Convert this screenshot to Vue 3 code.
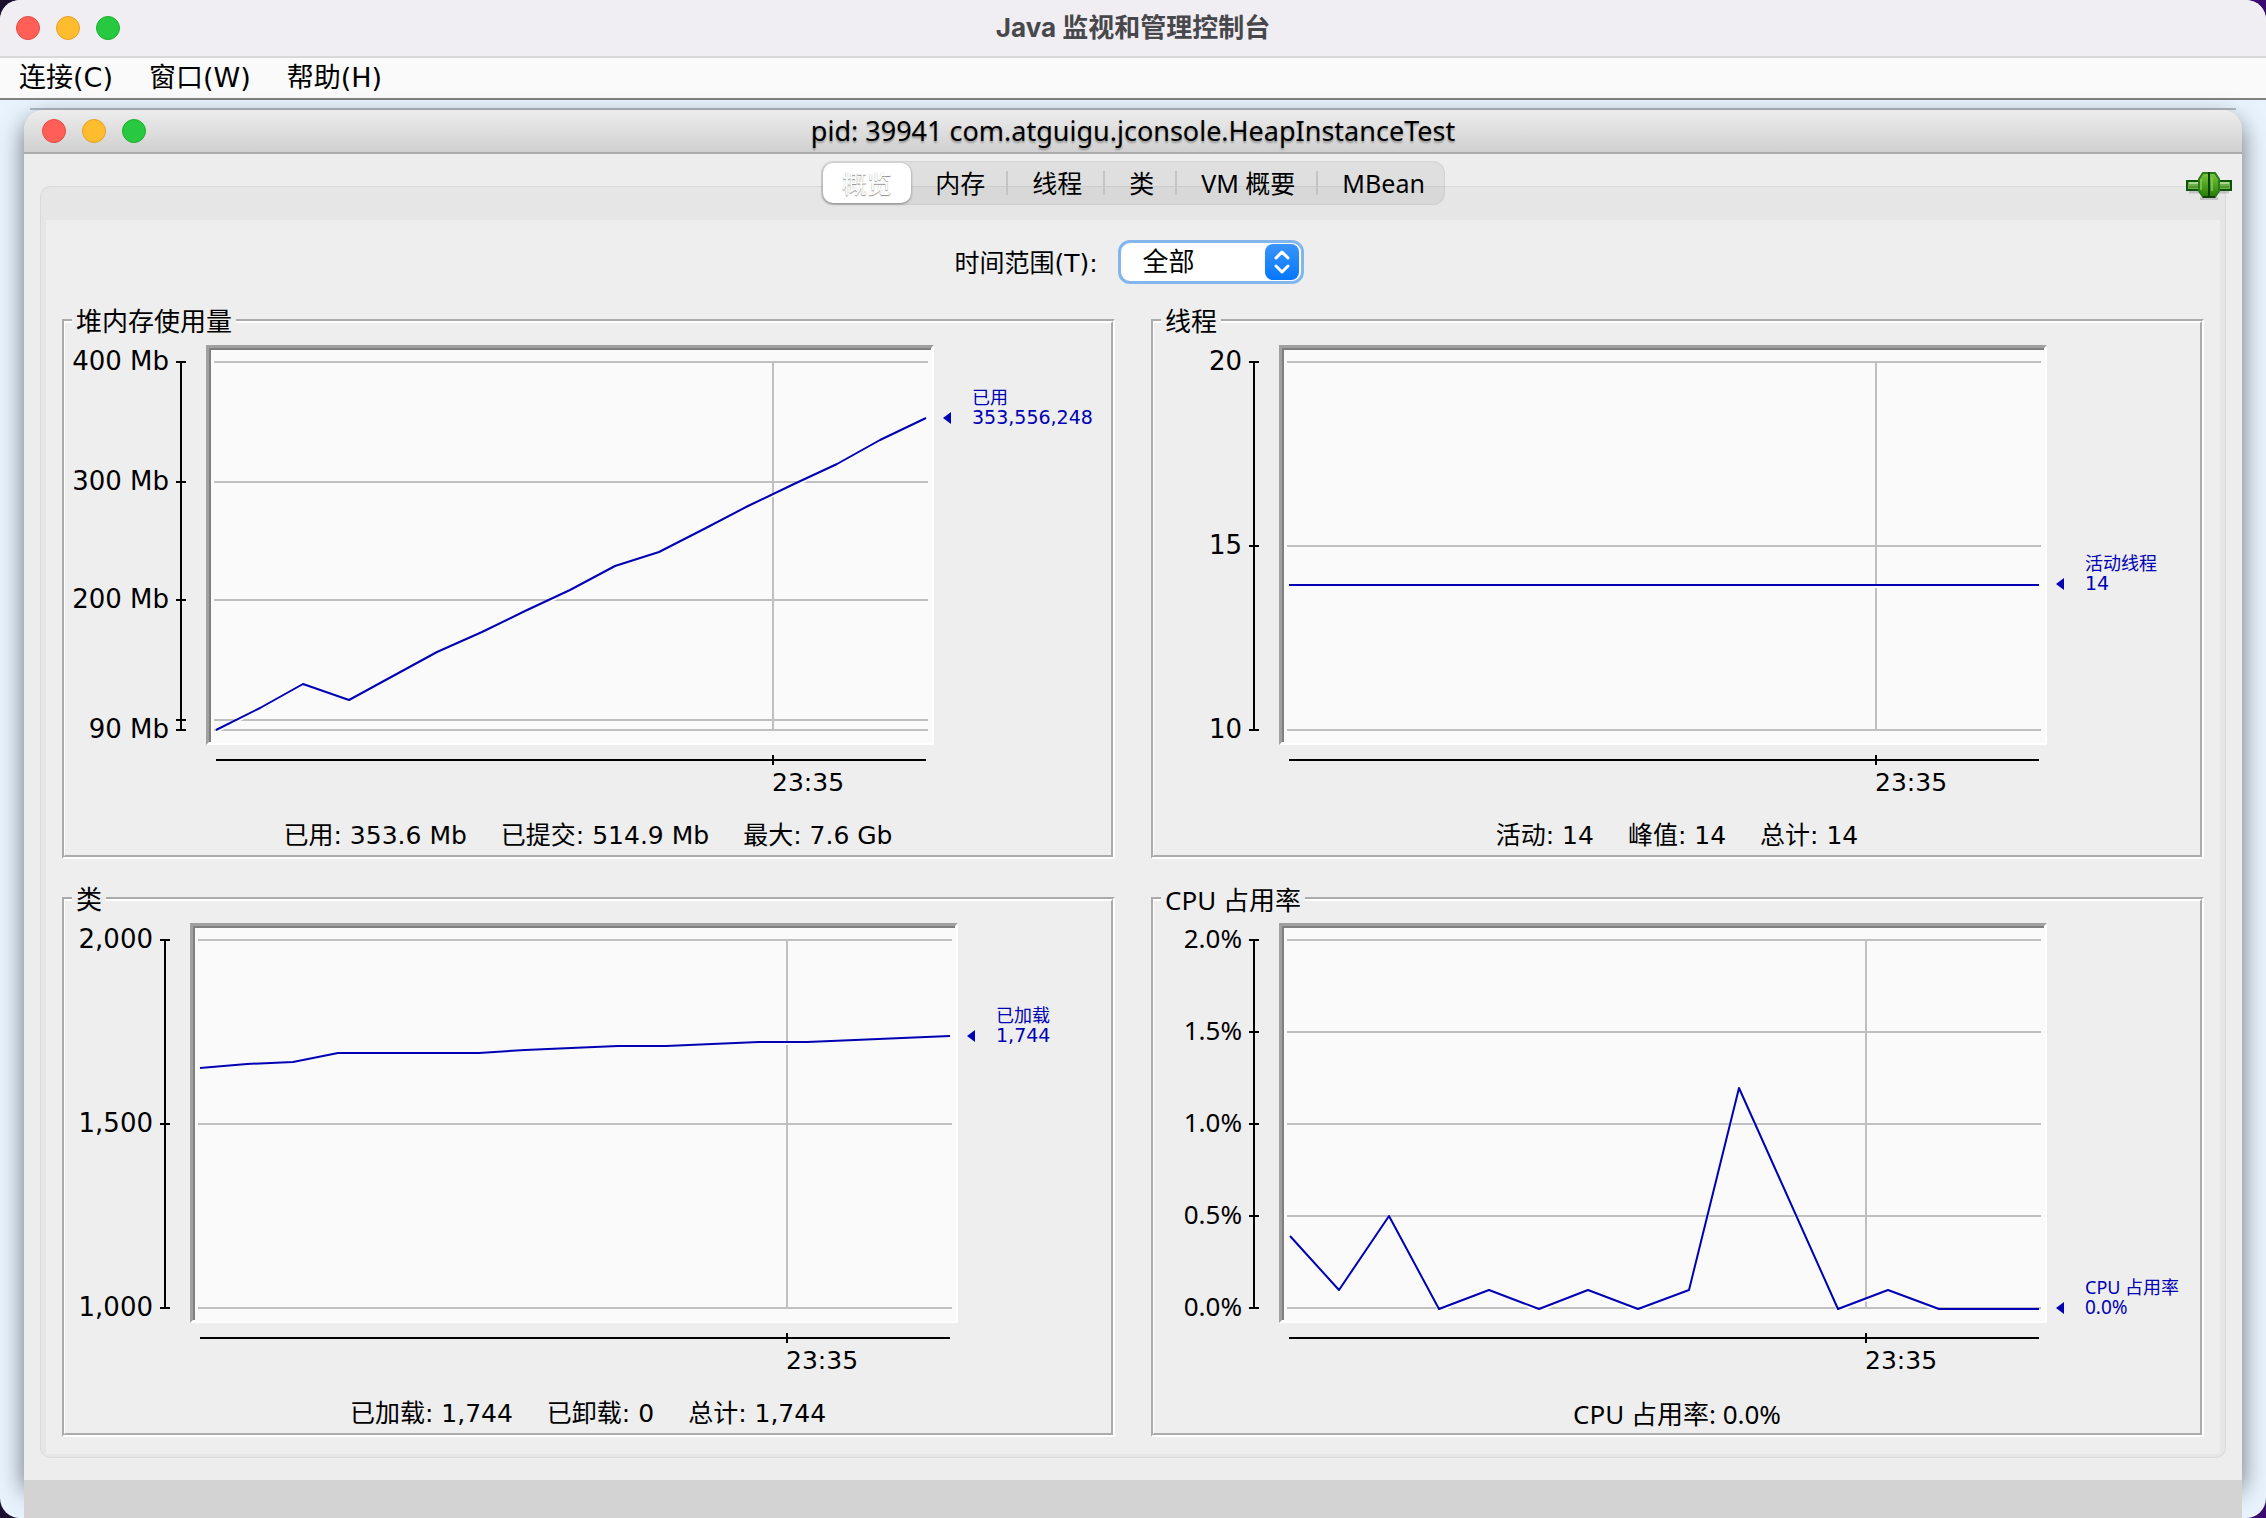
<script setup>
import { ref } from 'vue'

const menus = ['连接(C)', '窗口(W)', '帮助(H)']
const tabs = ['概览', '内存', '线程', '类', 'VM 概要', 'MBean']
const activeTab = ref('概览')
const range = ref('全部')

// Plot coordinates are in the units of the chart's own viewBox.
const charts = [
  {
    title: '堆内存使用量',
    axisX: 115,
    left: 140,
    right: 868,
    timeX: 707,
    ticks: [
      { y: 27, label: '400 Mb' },
      { y: 147, label: '300 Mb' },
      { y: 265, label: '200 Mb' },
      { y: 385, label: '' },
      { y: 395, label: '90 Mb' }
    ],
    points:
      '150,395 194,373 237,349 283,365 327,341 371,317 416,297 459,276 504,255 549,231 593,217 638,194 682,171 728,149 771,129 814,105 860,83',
    end: 83,
    series: '已用',
    value: '353,556,248',
    summary: ['已用: 353.6 Mb', '已提交: 514.9 Mb', '最大: 7.6 Gb']
  },
  {
    title: '线程',
    axisX: 99,
    left: 124,
    right: 892,
    timeX: 721,
    ticks: [
      { y: 27, label: '20' },
      { y: 211, label: '15' },
      { y: 395, label: '10' }
    ],
    points: '134,250 884,250',
    end: 249,
    series: '活动线程',
    value: '14',
    summary: ['活动: 14', '峰值: 14', '总计: 14']
  },
  {
    title: '类',
    axisX: 99,
    left: 124,
    right: 892,
    timeX: 721,
    ticks: [
      { y: 27, label: '2,000' },
      { y: 211, label: '1,500' },
      { y: 395, label: '1,000' }
    ],
    points:
      '134,155 181,151 227,149 272,140 413,140 459,137 505,135 552,133 600,133 646,131 693,129 741,129 789,127 836,125 884,123',
    end: 123,
    series: '已加载',
    value: '1,744',
    summary: ['已加载: 1,744', '已卸载: 0', '总计: 1,744']
  },
  {
    title: 'CPU 占用率',
    percent: true,
    axisX: 99,
    left: 124,
    right: 892,
    timeX: 711,
    ticks: [
      { y: 27, label: '2.0%' },
      { y: 119, label: '1.5%' },
      { y: 211, label: '1.0%' },
      { y: 303, label: '0.5%' },
      { y: 395, label: '0.0%' }
    ],
    points:
      '135,323 184,377 234,303 284,396 334,377 384,396 433,377 483,396 534,377 584,175 683,396 733,377 784,396 884,396',
    end: 395,
    series: 'CPU 占用率',
    value: '0.0%',
    summary: ['CPU 占用率: 0.0%']
  }
]
</script>

<template>
  <div class="window">
    <header class="titlebar">
      <div class="lights"><i class="red"></i><i class="yellow"></i><i class="green"></i></div>
      <h1>Java 监视和管理控制台</h1>
    </header>

    <nav class="menubar">
      <button v-for="m in menus" :key="m" type="button">{{ m }}</button>
    </nav>

    <main class="desktop">
      <div class="topline"></div>
      <section class="frame">
        <header class="frame-title">
          <div class="lights"><i class="red"></i><i class="yellow"></i><i class="green"></i></div>
          <h2>pid: 39941 com.atguigu.jconsole.HeapInstanceTest</h2>
        </header>

        <div class="frame-body">
          <svg class="plug" viewBox="0 0 46 28" role="img" aria-label="已连接">
            <defs>
              <linearGradient id="leaf" x1="0" y1="0" x2="0" y2="1">
                <stop offset="0" stop-color="#7cc83c" />
                <stop offset="1" stop-color="#237a06" />
              </linearGradient>
            </defs>
            <path d="M3 20H43M14 27H32" stroke="#000" stroke-opacity=".16" stroke-width="3" />
            <rect x="1" y="9" width="44" height="9" fill="#6fae4c" stroke="#0f5408" stroke-width="2" />
            <path d="M3 11H43" stroke="#a9d88c" stroke-width="2" />
            <path d="M3 15H43" stroke="#4f9a30" stroke-width="2" />
            <path d="M17 1H29L33 7V19L29 25H17L13 19V7Z" fill="url(#leaf)" stroke="#2d7a1c" stroke-width="2" />
            <path d="M15 7V18M26 5V19" stroke="#8acb58" stroke-width="2" stroke-opacity=".7" />
            <path d="M23 0V26" stroke="#08420a" stroke-width="2" />
            <path d="M17 25H29" stroke="#173f12" stroke-width="2" />
          </svg>

          <div class="tabs" role="tablist">
            <button
              v-for="t in tabs"
              :key="t"
              type="button"
              role="tab"
              :aria-selected="t === activeTab"
              :class="{ active: t === activeTab }"
              @click="activeTab = t"
            >{{ t }}</button>
          </div>

          <div class="pane">
            <div class="pane-inner">
              <div class="range">
                <label for="range">时间范围(T):</label>
                <div class="picker">
                  <select id="range" v-model="range">
                    <option>全部</option>
                  </select>
                  <svg viewBox="0 0 34 36" aria-hidden="true">
                    <defs>
                      <linearGradient id="knob" x1="0" y1="0" x2="0" y2="1">
                        <stop offset="0" stop-color="#3a94fb" />
                        <stop offset="1" stop-color="#0477fd" />
                      </linearGradient>
                    </defs>
                    <rect width="34" height="36" rx="8" fill="url(#knob)" />
                    <path
                      d="M11 14L17 8L23 14M11 22L17 28L23 22"
                      fill="none"
                      stroke="#fff"
                      stroke-width="3"
                      stroke-linecap="round"
                      stroke-linejoin="round"
                    />
                  </svg>
                </div>
              </div>

              <div class="charts">
                <fieldset v-for="c in charts" :key="c.title" :class="{ percent: c.percent }">
                  <legend>{{ c.title }}</legend>
                  <svg class="chart" viewBox="-1 1 1046 480" role="img" :aria-label="c.title">
                    <rect :x="c.left" y="10" :width="c.right - c.left" height="400" fill="#fff" />
                    <rect :x="c.left + 5" y="15" :width="c.right - c.left - 7" height="393" fill="#fafafa" />
                    <path
                      :d="`M${c.left} 410V10H${c.right}L${c.right - 3} 13H${c.left + 3}V407Z`"
                      fill="#a0a0a0"
                    />
                    <path
                      :d="`M${c.left + 4} 407V14H${c.right - 3}`"
                      fill="none"
                      stroke="#808080"
                      stroke-width="2"
                    />
                    <g stroke="#c0c0c0" stroke-width="2">
                      <line
                        v-for="t in c.ticks"
                        :key="t.y"
                        :x1="c.left + 8"
                        :x2="c.right - 6"
                        :y1="t.y"
                        :y2="t.y"
                      />
                      <line :x1="c.timeX" :x2="c.timeX" y1="26" y2="396" />
                    </g>
                    <g fill="none" stroke-width="2" stroke-linejoin="round">
                      <polyline :points="c.points" stroke="#fafafa" transform="translate(0 2)" />
                      <polyline :points="c.points" stroke="#0000b4" />
                    </g>
                    <g stroke="#000" stroke-width="2">
                      <line :x1="c.axisX" :x2="c.axisX" y1="26" y2="396" />
                      <line
                        v-for="t in c.ticks"
                        :key="t.y"
                        :x1="c.axisX - 5"
                        :x2="c.axisX + 5"
                        :y1="t.y"
                        :y2="t.y"
                      />
                      <line :x1="c.left + 10" :x2="c.right - 8" y1="425" y2="425" />
                      <line :x1="c.timeX" :x2="c.timeX" y1="420" y2="430" />
                    </g>
                    <g class="axis-text">
                      <text
                        v-for="t in c.ticks"
                        :key="t.y"
                        :x="c.axisX - 12"
                        :y="t.y + 8"
                        text-anchor="end"
                      >{{ t.label }}</text>
                      <text class="time" :x="c.timeX - 1" y="456">23:35</text>
                    </g>
                    <path :d="`M${c.right + 9} ${c.end}l8 -6v12z`" fill="#0000b4" />
                    <g class="series-text">
                      <text :x="c.right + 38" :y="c.end - 14">{{ c.series }}</text>
                      <text class="value" :x="c.right + 38" :y="c.end + 6">{{ c.value }}</text>
                    </g>
                  </svg>
                  <p class="summary">
                    <span v-for="s in c.summary" :key="s">{{ s }}</span>
                  </p>
                </fieldset>
              </div>
            </div>
          </div>
        </div>
      </section>
      <footer class="statusbar"></footer>
    </main>
  </div>
</template>

<style>
body {
  margin: 0;
  background: linear-gradient(90deg, #1d0f2e, #3a0a70);
}
</style>

<style scoped>
.window {
  min-height: 100vh;
  display: flex;
  flex-direction: column;
  overflow: hidden;
  border-radius: 20px;
  background: #e8f3fe;
  color: #000;
  font: 26px/32px "DejaVu Sans", "Noto Sans CJK SC", sans-serif;
}
button,
select {
  font: inherit;
  color: inherit;
  border: 0;
  background: none;
  margin: 0;
  padding: 0;
}
h1,
h2,
p {
  margin: 0;
}
.titlebar {
  display: grid;
  grid-template-columns: 1fr auto 1fr;
  align-items: center;
  height: 56px;
  padding: 0 16px;
  background: #f0eef3;
  border-bottom: 2px solid #d8d7da;
}
.titlebar h1 {
  font: 700 26px/32px Inter, "Noto Sans CJK SC", sans-serif;
  color: #48474b;
}
.lights {
  display: flex;
  gap: 16px;
}
.lights i {
  width: 24px;
  height: 24px;
  box-sizing: border-box;
  border-radius: 50%;
  border: 1px solid;
}
.lights .red {
  background: #ff5f57;
  border-color: #e24b41;
}
.lights .yellow {
  background: #febc2e;
  border-color: #e1a325;
}
.lights .green {
  background: #28c840;
  border-color: #1dad2c;
}
.menubar {
  display: flex;
  gap: 36px;
  align-items: center;
  height: 40px;
  padding: 0 19px;
  font-size: 27px;
  background: #fafafa;
  border-bottom: 2px solid #808080;
}
.desktop {
  flex: 1;
  display: flex;
  flex-direction: column;
  padding: 8px 24px 0;
}
.topline {
  height: 2px;
  margin: 0 6px;
  background: #b0b8c0;
}
.frame {
  flex: 1;
  border-radius: 20px 20px 0 0;
  background: #ededed;
  box-shadow: 0 10px 24px rgba(0, 0, 0, 0.55);
}
.frame-title {
  display: grid;
  grid-template-columns: 1fr auto 1fr;
  align-items: center;
  height: 42px;
  padding: 0 18px;
  border-radius: 20px 20px 0 0;
  border-bottom: 2px solid #acacac;
  background: linear-gradient(#ededed, #d0d0d0);
}
.frame-title h2 {
  font-family: "Noto Sans", sans-serif;
  font-size: 27px;
  font-weight: 400;
  text-shadow: 0 2px 2px rgba(0, 0, 0, 0.3);
}
.frame-body {
  position: relative;
  padding: 7px 16px 22px;
}
.plug {
  position: absolute;
  top: 18px;
  right: 10px;
  width: 46px;
  height: 28px;
  z-index: 2;
}
.tabs {
  position: relative;
  z-index: 1;
  display: flex;
  width: fit-content;
  height: 44px;
  margin: 0 auto -19px;
  padding: 2px;
  box-sizing: border-box;
  border-radius: 12px;
  background: rgba(0, 0, 0, 0.06);
  box-shadow: inset 0 0 1px 1px rgba(0, 0, 0, 0.05);
}
.tabs button {
  padding: 0 23px 0 24px;
  font-family: "Noto Sans", "Noto Sans CJK SC", sans-serif;
  font-size: 25px;
  line-height: 38px;
  background: linear-gradient(#c4c4c4, #c4c4c4) right center / 2px 24px no-repeat;
}
.tabs button:last-child {
  padding-right: 18px;
  background: none;
}
.tabs button.active {
  padding: 0 19px;
  border-radius: 10px;
  background: #fff;
  color: #fff;
  text-shadow: 0 1px 1px #888;
  box-shadow: 0 1px 3px rgba(0, 0, 0, 0.4);
}
.pane {
  padding: 33px 5px 3px;
  border: 1px solid #dadada;
  border-radius: 10px;
  background: #e6e6e6;
}
.pane-inner {
  padding: 20px 16px 17px;
  background: #eee;
}
.range {
  display: flex;
  justify-content: center;
  align-items: center;
  gap: 20px;
  margin-bottom: 22px;
  padding-right: 8px;
}
.range label {
  padding-top: 4px;
  font-size: 25px;
}
.picker {
  position: relative;
  display: flex;
}
.picker select {
  appearance: none;
  width: 186px;
  height: 44px;
  padding: 0 0 0 22px;
  border: 3px solid #84b6ee;
  border-radius: 12px;
  background: #fff;
  outline: 0;
}
.picker svg {
  position: absolute;
  right: 5px;
  top: 4px;
  width: 34px;
  height: 36px;
  pointer-events: none;
}
.charts {
  display: grid;
  grid-template-columns: repeat(2, minmax(0, 1fr));
  gap: 25px 36px;
}
fieldset {
  min-width: 0;
  margin: 0;
  padding: 0;
  border: 4px groove #fff;
  border-left-width: 3px;
}
.percent {
  font-family: "Noto Sans", "Noto Sans CJK SC", sans-serif;
}
legend {
  height: 30px;
  margin-left: 7px;
  padding: 0 4px;
  line-height: 32px;
}
.chart {
  display: block;
  width: 100%;
}
.axis-text {
  font-size: 26px;
}
.time {
  font-family: "DejaVu Sans", sans-serif;
  font-size: 25px;
}
.series-text {
  font-size: 18px;
  fill: #0000b4;
}
.value {
  font-size: 19px;
}
.summary {
  display: flex;
  justify-content: center;
  gap: 34px;
  height: 39px;
  font-size: 25px;
  line-height: 40px;
}
.percent .summary {
  font-size: 26px;
}
.statusbar {
  position: relative;
  height: 38px;
  background: #d3d3d3;
}
</style>
